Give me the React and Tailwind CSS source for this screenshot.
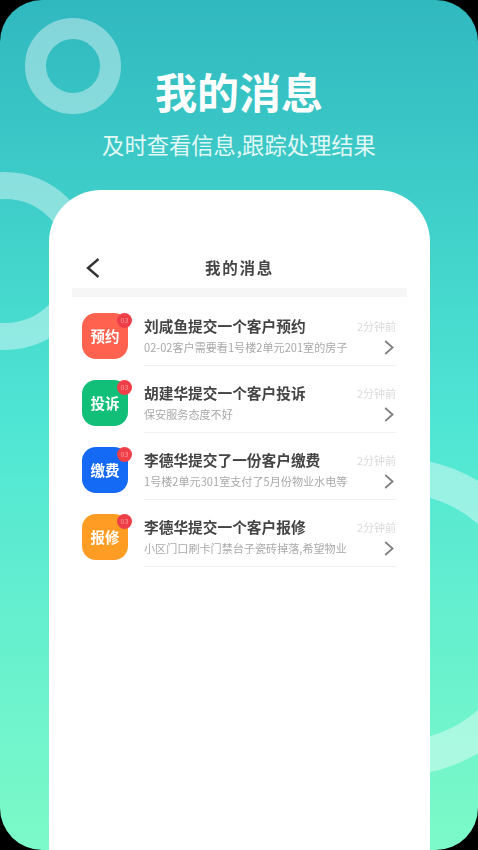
import React from 'react'

const font = { fontFamily: '"Noto Sans CJK SC", "Noto Sans", sans-serif' }

const messages = [
  { tag: '预约', color: 'bg-[#ff6350]', title: '刘咸鱼提交一个客户预约', desc: '02-02客户需要看1号楼2单元201室的房子' },
  { tag: '投诉', color: 'bg-[#12bf78]', title: '胡建华提交一个客户投诉', desc: '保安服务态度不好' },
  { tag: '缴费', color: 'bg-[#1469f5]', title: '李德华提交了一份客户缴费', desc: '1号楼2单元301室支付了5月份物业水电等' },
  { tag: '报修', color: 'bg-[#ff9c24]', title: '李德华提交一个客户报修', desc: '小区门口刷卡门禁台子瓷砖掉落,希望物业' },
]

function MessageRow({ tag, color, title, desc }) {
  return (
    <div className="flex items-start h-[67px] ml-[10px] mr-[11px]">
      <div className={`relative shrink-0 w-[46px] h-[46px] rounded-[14px] ${color} flex items-center justify-center`}>
        <span className="text-white text-[14.5px] font-bold leading-none">{tag}</span>
        <span className="absolute top-0 -right-[4px] w-[15px] h-[15px] rounded-full bg-[#ee3f48] text-[#ff9d9d] text-[7px] leading-[15px] text-center">03</span>
      </div>
      <div className="flex-1 min-w-0 ml-[16px] h-[53px] border-b border-[#f1f1f1]">
        <div className="flex items-center justify-between h-[27px]">
          <span className="text-[14.7px] font-bold text-[#444444] whitespace-nowrap">{title}</span>
          <span className="text-[11px] text-[#d9d9d9] whitespace-nowrap">2分钟前</span>
        </div>
        <div className="flex items-center justify-between h-[15px] pr-[2px]">
          <span className="text-[11.1px] text-[#a9a9a9] whitespace-nowrap">{desc}</span>
          <svg width="10" height="15" viewBox="0 0 10 15" fill="none" className="shrink-0">
            <path d="M1.2 1 L8.6 7.5 L1.2 14" stroke="#808080" strokeWidth="1.8" />
          </svg>
        </div>
      </div>
    </div>
  )
}

export default function App() {
  return (
    <div className="bg-black w-[478px] h-[850px]" style={font}>
      <div className="relative flex flex-col h-[850px] rounded-[42px] overflow-hidden bg-gradient-to-b from-[#30b8bf] via-[#4fe6d4] via-50% to-[#7cfac8]">
        {/* decorative rings behind the card */}
        <div className="absolute left-[25px] top-[18px] w-[96px] h-[96px] rounded-full border-[21px] border-white/40" />
        <div className="absolute -left-[84px] top-[172px] w-[178px] h-[178px] rounded-full border-[27px] border-white/40" />
        <div className="absolute left-[237px] top-[458px] w-[318px] h-[318px] rounded-full border-[35px] border-white/40" />

        <div className="relative flex flex-col items-center pt-[64px] text-white">
          <h1 className="text-[42px] leading-[54px] font-bold">我的消息</h1>
          <p className="mt-[11px] text-[22.3px] leading-[30px] text-[#e2f8f6] whitespace-nowrap">及时查看信息,跟踪处理结果</p>
        </div>

        <div className="relative flex-1 mt-[31px] mx-[49px] mr-[48px] bg-white rounded-t-[52px] pt-[58px] px-[23px] blur-[0.5px]">
          <div className="relative flex items-center justify-center h-[40px]">
            <svg width="14" height="20" viewBox="0 0 14 20" fill="none" className="absolute left-[14px] top-[10px]">
              <path d="M12.5 1 L2 10 L12.5 19" stroke="#333333" strokeWidth="2.4" />
            </svg>
            <span className="text-[15.5px] font-bold text-[#444444] tracking-[1.8px]">我的消息</span>
          </div>
          <div className="h-[9px] bg-[#f6f6f6]" />
          <div className="pt-[16px]">
            {messages.map((m) => (
              <MessageRow key={m.tag} {...m} />
            ))}
          </div>
        </div>
      </div>
    </div>
  )
}
